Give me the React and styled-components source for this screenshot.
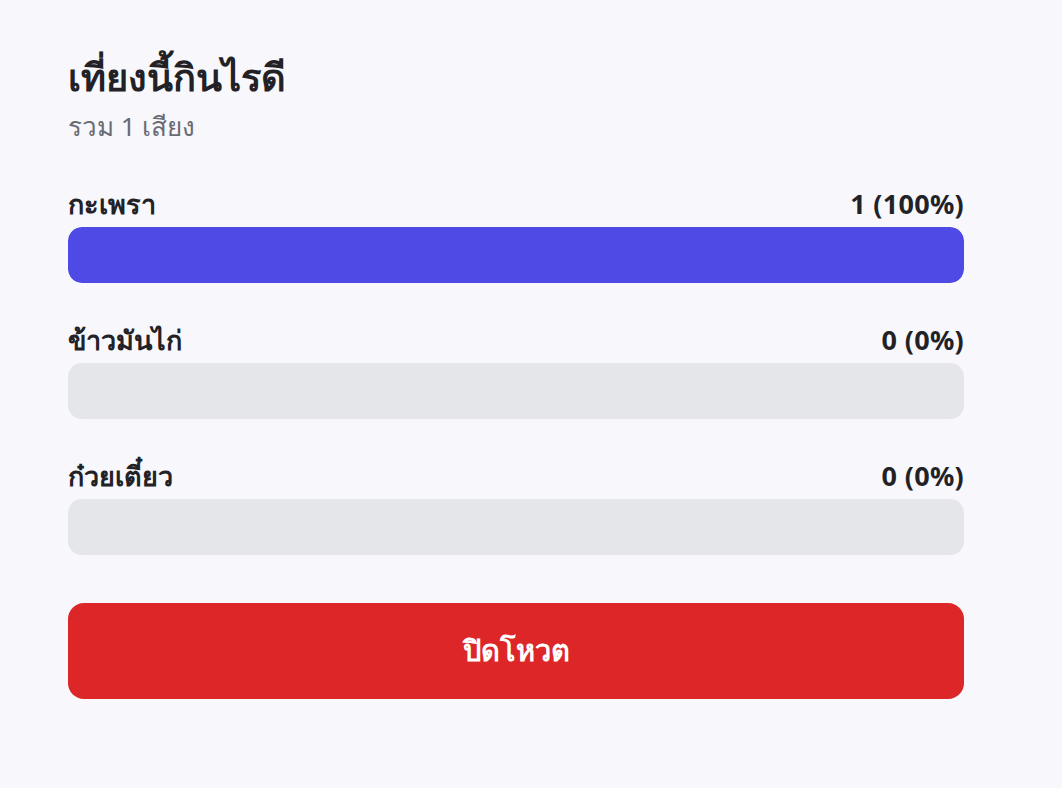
import React from "react";
import styled, { createGlobalStyle } from "styled-components";

const Global = createGlobalStyle`
  html, body { margin: 0; padding: 0; background: #f7f7fc; }
  body { font-family: "Noto Sans", "DejaVu Sans", sans-serif; }
`;

const Page = styled.div`
  padding: 54px 0 40px 68px;
  width: 896px;
`;

const Title = styled.h1`
  margin: 0;
  font-size: 38px;
  line-height: 44px;
  font-weight: 700;
  color: #222226;
`;

const Subtitle = styled.div`
  margin-top: 12px;
  font-size: 26px;
  line-height: 32px;
  color: #6b6b73;
`;

const Options = styled.div`
  margin-top: 47px;
  display: flex;
  flex-direction: column;
  gap: 42px;
`;

const Option = styled.div`
  display: flex;
  flex-direction: column;
  gap: 8px;
`;

const LabelRow = styled.div`
  display: flex;
  justify-content: space-between;
  align-items: center;
  font-size: 27px;
  line-height: 30px;
  font-weight: 700;
  color: #222226;
`;

const Count = styled.span`
  letter-spacing: 0.3px;
`;

const Track = styled.div`
  height: 56px;
  border-radius: 14px;
  background: #e5e6ea;
  overflow: hidden;
`;

const Fill = styled.div`
  height: 100%;
  background: #4f49e6;
  border-radius: 14px;
`;

const CloseButton = styled.button`
  margin-top: 48px;
  width: 100%;
  height: 96px;
  border: none;
  border-radius: 16px;
  background: #dc2627;
  color: #ffffff;
  font-family: inherit;
  font-size: 29px;
  font-weight: 700;
  cursor: pointer;
`;

const options = [
  { name: "กะเพรา", votes: 1 },
  { name: "ข้าวมันไก่", votes: 0 },
  { name: "ก๋วยเตี๋ยว", votes: 0 },
];

export default function App() {
  const total = options.reduce((s, o) => s + o.votes, 0);
  return (
    <>
      <Global />
      <Page>
        <Title>เที่ยงนี้กินไรดี</Title>
        <Subtitle>รวม {total} เสียง</Subtitle>
        <Options>
          {options.map((o) => {
            const pct = total ? Math.round((o.votes / total) * 100) : 0;
            return (
              <Option key={o.name}>
                <LabelRow>
                  <span>{o.name}</span>
                  <Count>
                    {o.votes} ({pct}%)
                  </Count>
                </LabelRow>
                <Track>
                  {pct > 0 && <Fill style={{ width: `${pct}%` }} />}
                </Track>
              </Option>
            );
          })}
        </Options>
        <CloseButton>ปิดโหวต</CloseButton>
      </Page>
    </>
  );
}
